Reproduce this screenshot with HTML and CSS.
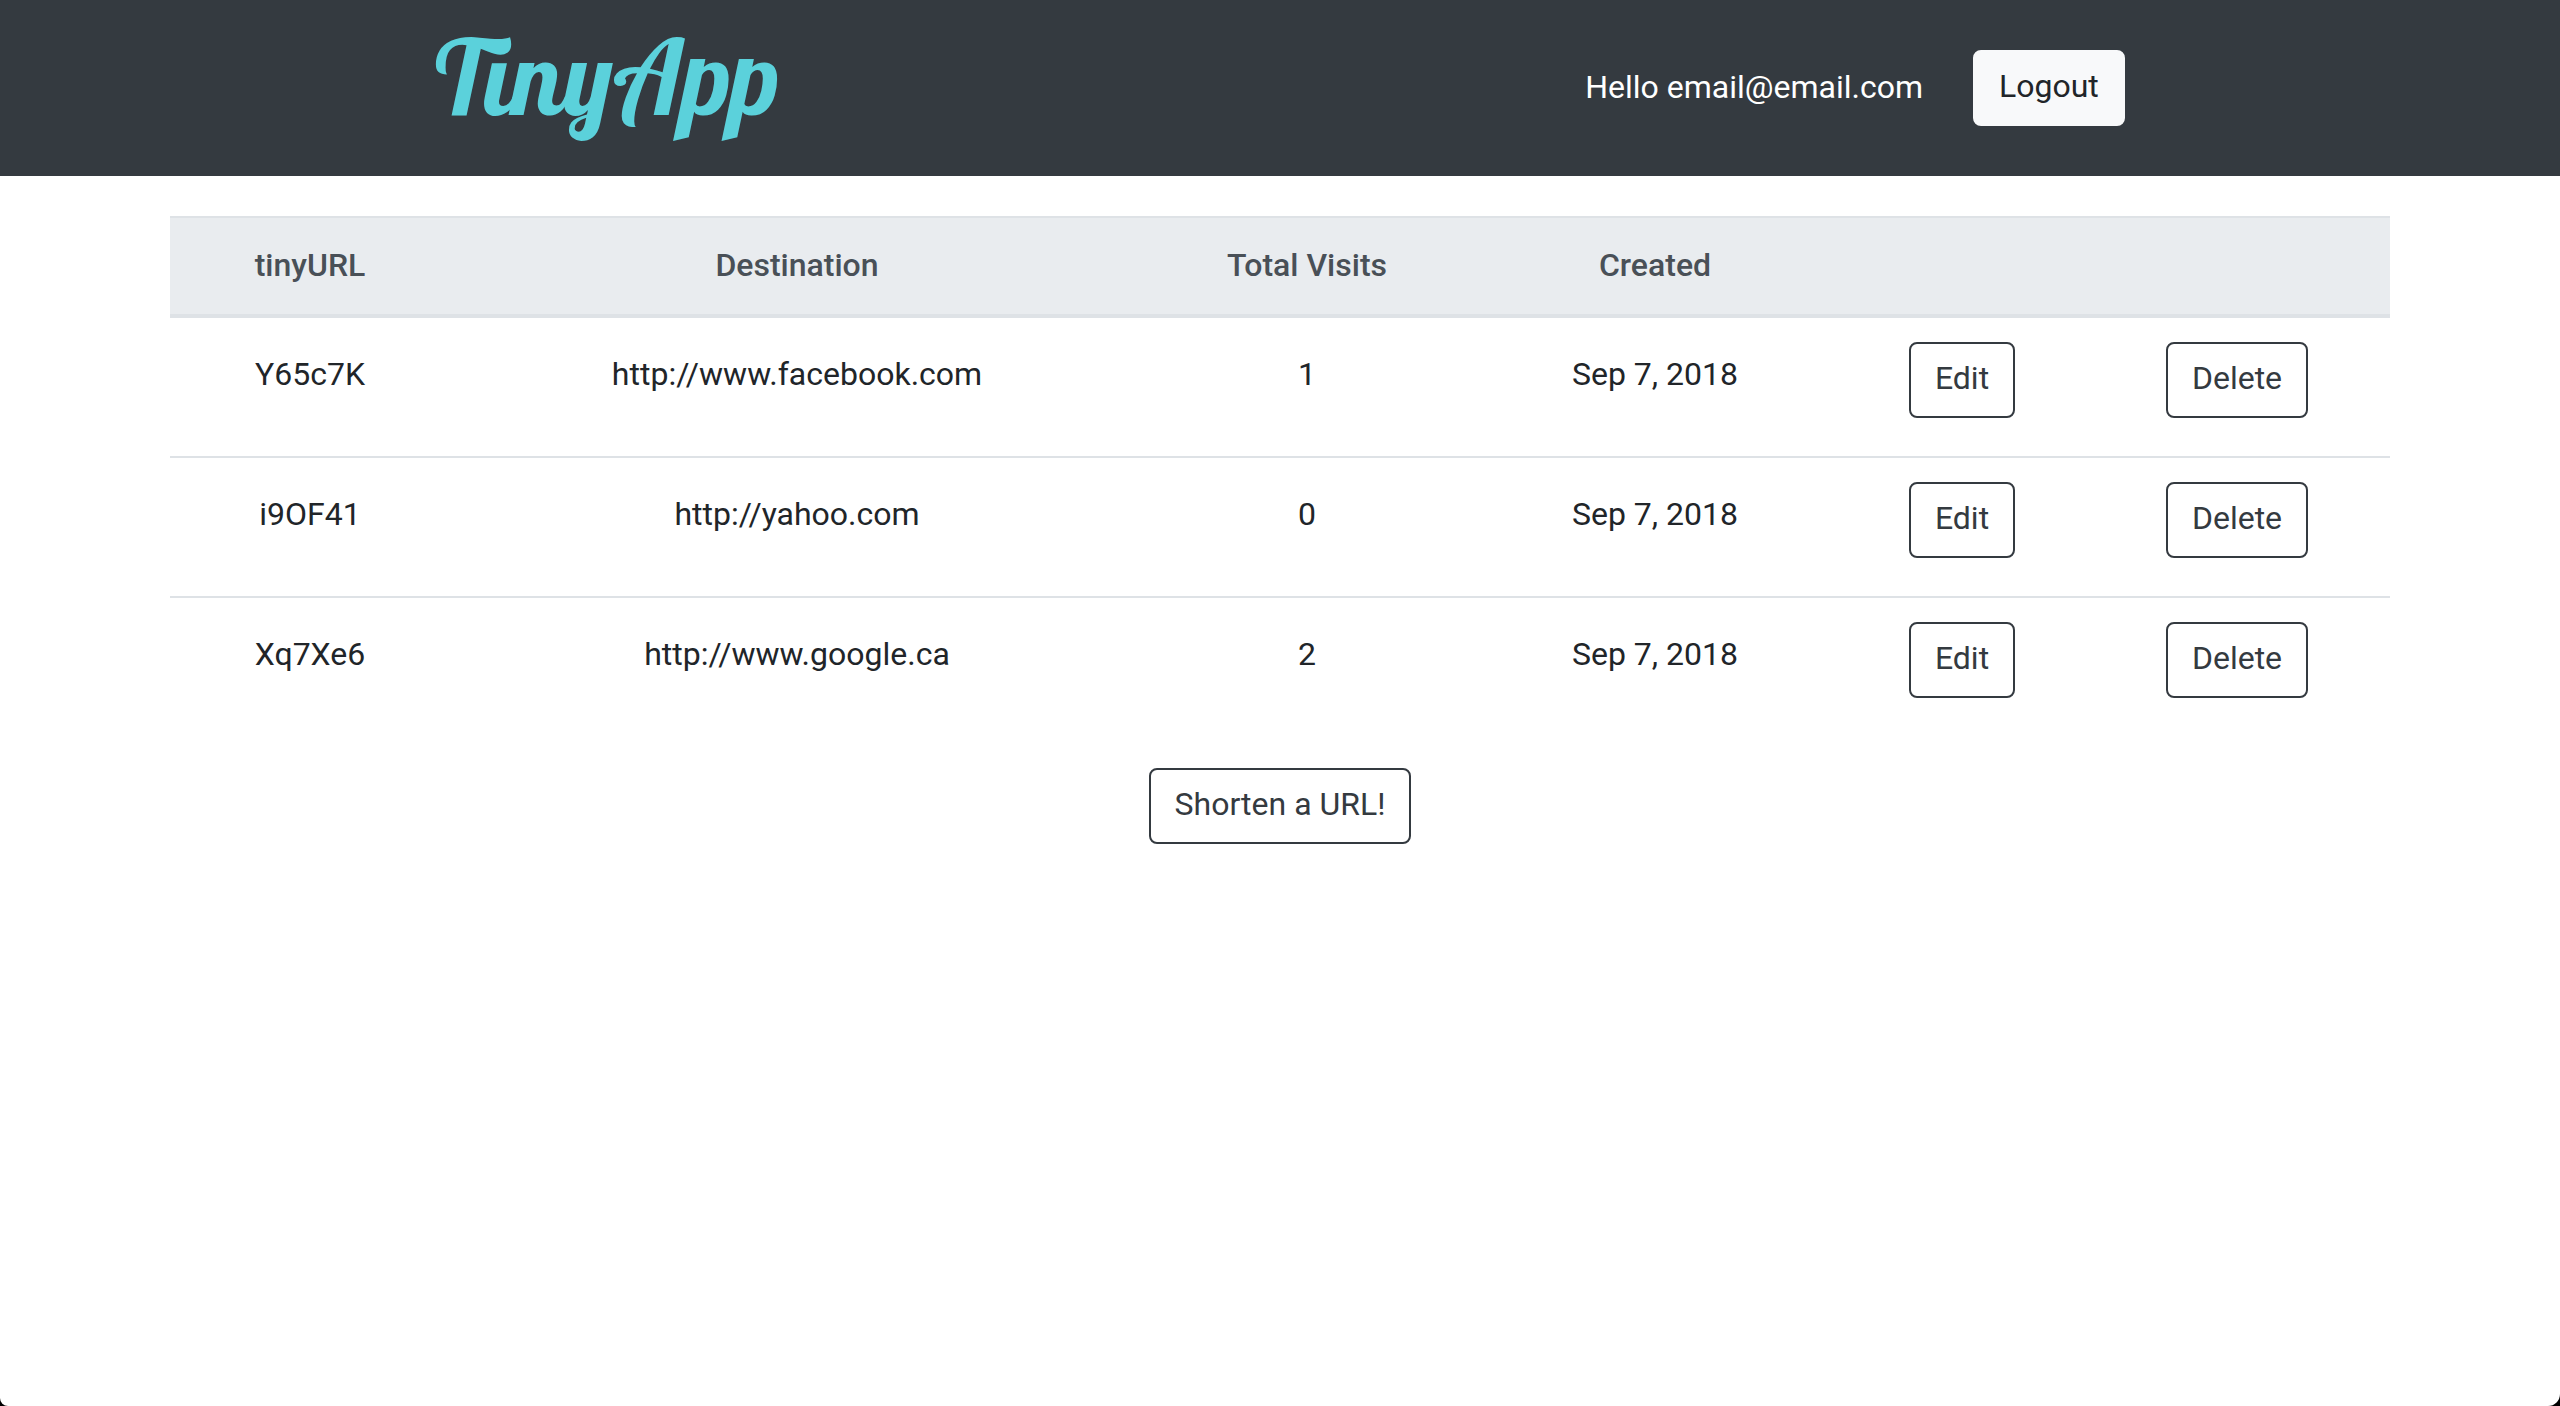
FILE: index.html
```html
<!DOCTYPE html>
<html lang="en">
<head>
  <meta charset="utf-8">
  <meta name="viewport" content="width=device-width, initial-scale=1">
  <title>TinyApp</title>
  <link rel="stylesheet" href="styles.css">
</head>
<body>
  <header class="navbar">
    <a class="brand" href="#">TinyApp</a>
    <div class="account">
      <span class="greeting">Hello email@email.com</span>
      <button class="btn btn-light" type="button">Logout</button>
    </div>
  </header>
  <main class="container">
    <table class="urls">
      <colgroup>
        <col class="col-key"><col class="col-destination"><col class="col-visits"><col class="col-created"><col class="col-edit"><col class="col-delete">
      </colgroup>
      <thead>
        <tr><th scope="col">tinyURL</th><th scope="col">Destination</th><th scope="col">Total Visits</th><th scope="col">Created</th><th></th><th></th></tr>
      </thead>
      <tbody>
        <tr>
          <td>Y65c7K</td><td>http://www.facebook.com</td><td>1</td><td>Sep 7, 2018</td>
          <td class="action"><button class="btn" type="button">Edit</button></td>
          <td class="action"><button class="btn" type="button">Delete</button></td>
        </tr>
        <tr>
          <td>i9OF41</td><td>http://yahoo.com</td><td>0</td><td>Sep 7, 2018</td>
          <td class="action"><button class="btn" type="button">Edit</button></td>
          <td class="action"><button class="btn" type="button">Delete</button></td>
        </tr>
        <tr>
          <td>Xq7Xe6</td><td>http://www.google.ca</td><td>2</td><td>Sep 7, 2018</td>
          <td class="action"><button class="btn" type="button">Edit</button></td>
          <td class="action"><button class="btn" type="button">Delete</button></td>
        </tr>
      </tbody>
    </table>
    <button class="btn" type="button">Shorten a URL!</button>
  </main>
</body>
</html>
```
FILE: styles.css
```css
* {
  box-sizing: border-box;
}

html {
  background: #000;
}

body {
  margin: 0;
  min-height: 100vh;
  background: #fff;
  border-radius: 0 0 12px 8px;
  color: #212529;
  font: 400 32px/48px Roboto, sans-serif;
}

.navbar {
  display: flex;
  align-items: center;
  justify-content: space-between;
  padding: 0 17%;
  height: 176px;
  background: #343a40;
}

.brand {
  padding-bottom: 24px;
  color: #5bd1db;
  font: 400 104px/120px Lobster, "Liberation Serif", serif;
  text-decoration: none;
}

.account {
  display: flex;
  align-items: center;
  gap: 50px;
  color: #fff;
}

.greeting {
  padding-bottom: 2px;
}

.btn {
  padding: 10px 24px 14px;
  border: 2px solid #343a40;
  border-radius: 8px;
  background: transparent;
  color: #343a40;
  font: inherit;
  cursor: pointer;
}

.btn-light {
  border-color: #f8f9fa;
  background: #f8f9fa;
  color: #212529;
}

.container {
  display: flex;
  flex-direction: column;
  align-items: center;
  max-width: 2280px;
  margin: 0 auto;
  padding: 40px 30px;
}

.urls {
  width: 100%;
  margin-bottom: 32px;
  table-layout: fixed;
  border-spacing: 0;
  text-align: center;
}

.col-key { width: 280px; }
.col-destination { width: 694px; }
.col-visits { width: 326px; }
.col-created { width: 370px; }
.col-edit { width: 244px; }
.col-delete { width: 306px; }

.urls th {
  padding: 23px 24px 25px;
  border-top: 2px solid #dee2e6;
  border-bottom: 4px solid #dee2e6;
  background: #e9ecef;
  color: #495057;
  font-weight: 500;
}

.urls td {
  padding: 32px 24px;
  border-bottom: 2px solid #dee2e6;
  vertical-align: top;
}

.urls .action {
  height: 140px;
  padding: 24px;
}

.urls tr:last-child .action {
  height: 138px;
}

.urls tbody tr:last-child td {
  border-bottom: 0;
}
```
